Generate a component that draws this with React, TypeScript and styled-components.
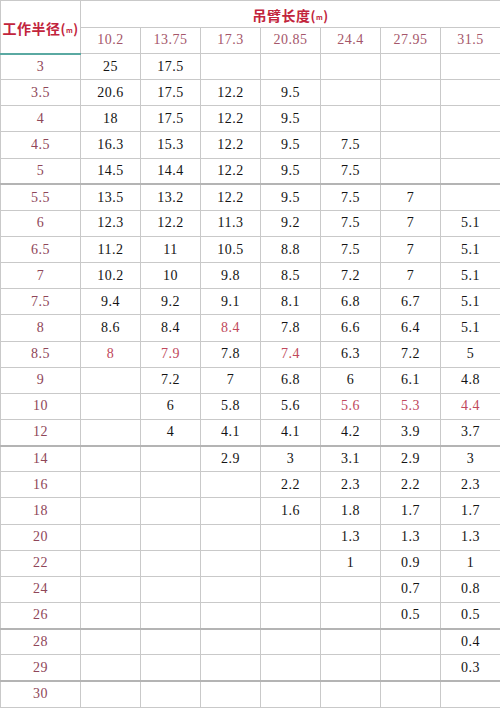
import React from 'react'
import styled, { createGlobalStyle } from 'styled-components'

const GlobalStyle = createGlobalStyle`
  html, body {
    margin: 0;
    padding: 0;
    background: #ffffff;
  }
`

type Cell = string | { v: string; red?: boolean } | null

interface LoadRow {
  radius: string
  thick?: boolean
  values: Cell[]
}

const booms = ['10.2', '13.75', '17.3', '20.85', '24.4', '27.95', '31.5']

const r = (v: string) => ({ v, red: true })

const rows: LoadRow[] = [
  { radius: '3', values: ['25', '17.5', null, null, null, null, null] },
  { radius: '3.5', values: ['20.6', '17.5', '12.2', '9.5', null, null, null] },
  { radius: '4', values: ['18', '17.5', '12.2', '9.5', null, null, null] },
  { radius: '4.5', values: ['16.3', '15.3', '12.2', '9.5', '7.5', null, null] },
  { radius: '5', values: ['14.5', '14.4', '12.2', '9.5', '7.5', null, null] },
  { radius: '5.5', thick: true, values: ['13.5', '13.2', '12.2', '9.5', '7.5', '7', null] },
  { radius: '6', values: ['12.3', '12.2', '11.3', '9.2', '7.5', '7', '5.1'] },
  { radius: '6.5', values: ['11.2', '11', '10.5', '8.8', '7.5', '7', '5.1'] },
  { radius: '7', values: ['10.2', '10', '9.8', '8.5', '7.2', '7', '5.1'] },
  { radius: '7.5', values: ['9.4', '9.2', '9.1', '8.1', '6.8', '6.7', '5.1'] },
  { radius: '8', values: ['8.6', '8.4', r('8.4'), '7.8', '6.6', '6.4', '5.1'] },
  { radius: '8.5', values: [r('8'), r('7.9'), '7.8', r('7.4'), '6.3', '7.2', '5'] },
  { radius: '9', values: [null, '7.2', '7', '6.8', '6', '6.1', '4.8'] },
  { radius: '10', values: [null, '6', '5.8', '5.6', r('5.6'), r('5.3'), r('4.4')] },
  { radius: '12', values: [null, '4', '4.1', '4.1', '4.2', '3.9', '3.7'] },
  { radius: '14', thick: true, values: [null, null, '2.9', '3', '3.1', '2.9', '3'] },
  { radius: '16', values: [null, null, null, '2.2', '2.3', '2.2', '2.3'] },
  { radius: '18', values: [null, null, null, '1.6', '1.8', '1.7', '1.7'] },
  { radius: '20', values: [null, null, null, null, '1.3', '1.3', '1.3'] },
  { radius: '22', values: [null, null, null, null, '1', '0.9', '1'] },
  { radius: '24', values: [null, null, null, null, null, '0.7', '0.8'] },
  { radius: '26', values: [null, null, null, null, null, '0.5', '0.5'] },
  { radius: '28', thick: true, values: [null, null, null, null, null, null, '0.4'] },
  { radius: '29', values: [null, null, null, null, null, null, '0.3'] },
  { radius: '30', thick: true, values: [null, null, null, null, null, null, null] },
]

export default function App() {
  return (
    <>
      <GlobalStyle />
      <Page>
        <Chart>
          <colgroup>
            <RadiusCol />
            {booms.map((b) => (
              <BoomCol key={b} />
            ))}
          </colgroup>
          <thead>
            <HeadRow>
              <CornerCell rowSpan={2}>
                工作半径<Unit>(<small>m</small>)</Unit>
              </CornerCell>
              <TitleCell colSpan={7}>
                吊臂长度<Unit>(<small>m</small>)</Unit>
              </TitleCell>
            </HeadRow>
            <HeadRow>
              {booms.map((b) => (
                <BoomCell key={b}>{b}</BoomCell>
              ))}
            </HeadRow>
          </thead>
          <tbody>
            {rows.map((row) => (
              <DataRow key={row.radius} $thick={row.thick}>
                <RadiusCell>{row.radius}</RadiusCell>
                {row.values.map((c, i) => {
                  if (c === null) return <ValueCell key={i} />
                  if (typeof c === 'string') return <ValueCell key={i}>{c}</ValueCell>
                  return (
                    <ValueCell key={i} $red={c.red}>
                      {c.v}
                    </ValueCell>
                  )
                })}
              </DataRow>
            ))}
          </tbody>
        </Chart>
      </Page>
    </>
  )
}

const Page = styled.div`
  width: 500px;
  height: 710px;
  background: #ffffff;
  overflow: hidden;
`

const Chart = styled.table`
  width: 500px;
  table-layout: fixed;
  border-collapse: collapse;
  font-family: 'Liberation Serif', 'Noto Sans CJK SC', serif;
  font-size: 14px;
  letter-spacing: 0.5px;

  td,
  th {
    border: 1px solid #c9c9c9;
    padding: 0;
    text-align: center;
    vertical-align: middle;
  }
`

const RadiusCol = styled.col`
  width: 80px;
`

const BoomCol = styled.col`
  width: 60px;
`

const HeadRow = styled.tr`
  height: 26.5px;
`

const CornerCell = styled.th`
  color: #c2243c;
  font-family: 'Noto Sans CJK SC', sans-serif;
  font-weight: 700;
  font-size: 14px;
  letter-spacing: 0.5px;
  padding-top: 2px !important;
  border-bottom: 2px solid #5aa9a2 !important;
`

const TitleCell = styled.th`
  color: #c2243c;
  font-family: 'Noto Sans CJK SC', sans-serif;
  font-weight: 700;
  font-size: 14px;
  padding-top: 2px !important;
`

const Unit = styled.span`
  font-size: 13px;
  font-weight: 700;

  small {
    font-size: 7px;
    vertical-align: 1px;
  }
`

const BoomCell = styled.th`
  color: #a5566a;
  font-weight: 400;
  font-size: 14px;
`

const DataRow = styled.tr<{ $thick?: boolean }>`
  height: 26.15px;

  td {
    border-top: ${(p) => (p.$thick ? '2px solid #b4b4b4' : '1px solid #c9c9c9')};
  }
`

const RadiusCell = styled.td`
  color: #8f4659;
`

const ValueCell = styled.td<{ $red?: boolean }>`
  color: ${(p) => (p.$red ? '#c0485c' : '#141414')};
`
